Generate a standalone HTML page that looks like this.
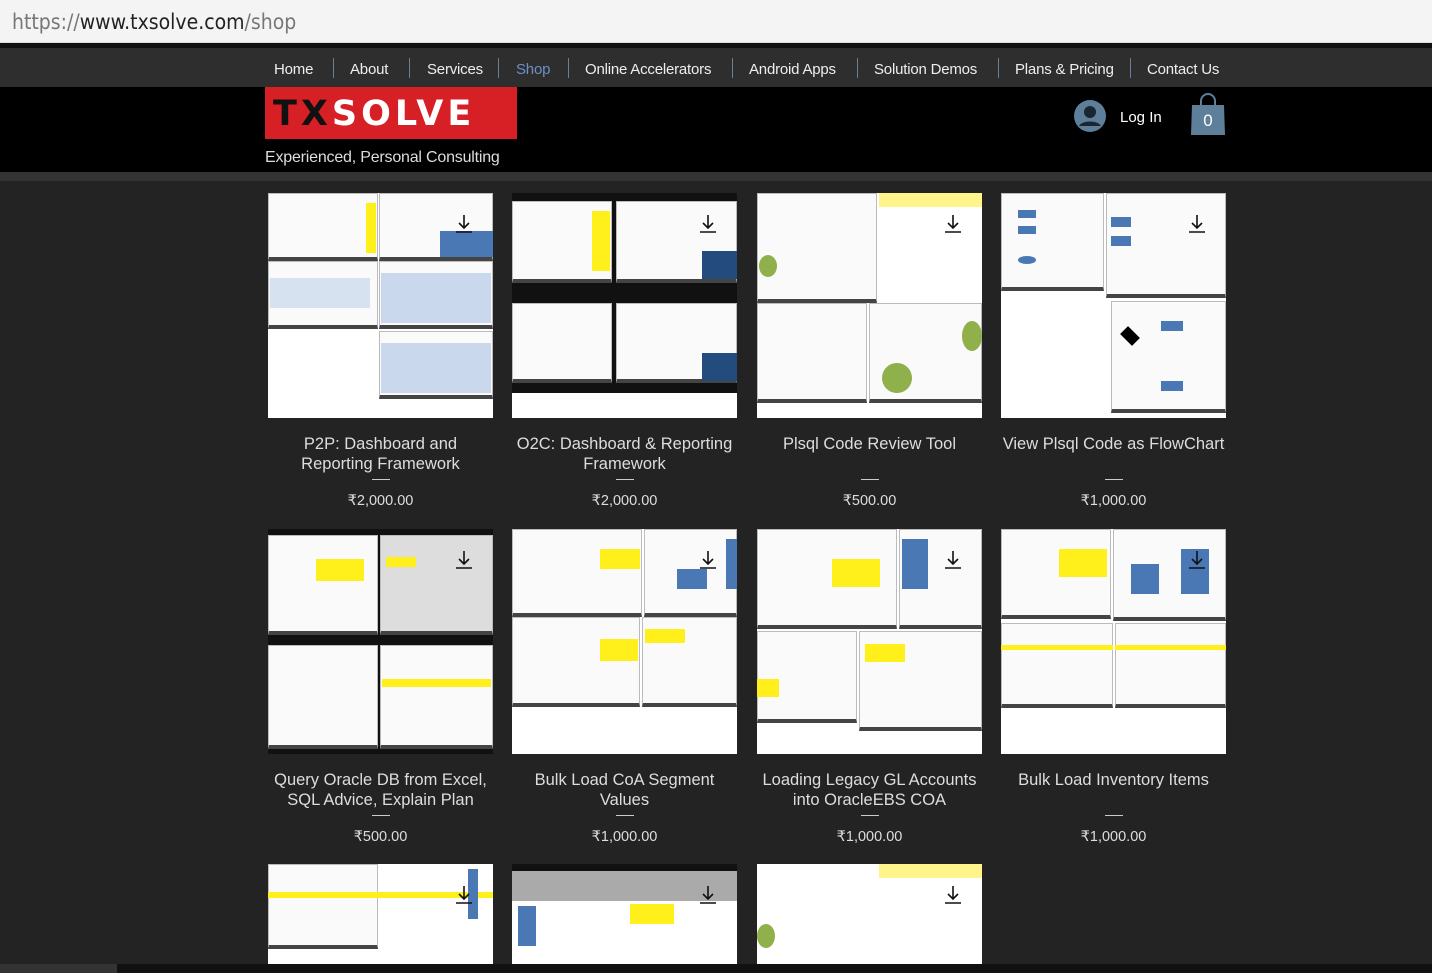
<!DOCTYPE html>
<html><head><meta charset="utf-8"><style>
*{margin:0;padding:0;box-sizing:border-box}
body{width:1432px;height:973px;overflow:hidden;background:#232323;font-family:"Liberation Sans",sans-serif;position:relative}
.url{position:absolute;left:0;top:0;width:1432px;height:43px;background:#f4f4f4;border-bottom:1px solid #ddd}
.url span{position:absolute;left:12px;top:10px;font-size:21px;color:#777;font-family:"DejaVu Sans Condensed","Liberation Sans",sans-serif}
.url b{font-weight:normal;color:#222}
.blk{position:absolute;left:0;top:43px;width:1432px;height:5px;background:#111}
.nav{position:absolute;left:0;top:48px;width:1432px;height:39px;background:#2e2e2e}
.nav a{position:absolute;top:13px;font-size:15px;color:#eee;text-decoration:none;white-space:nowrap;letter-spacing:-0.2px}
.sep{position:absolute;top:10px;width:1px;height:20px;background:#6a7fa0}
.hdr{position:absolute;left:0;top:87px;width:1432px;height:85px;background:#000}
.strip{position:absolute;left:0;top:172px;width:1432px;height:9px;background:#333}
.logo{position:absolute;left:265px;top:87px;width:252px;height:52px;background:#d71f26}
.logo span{position:absolute;left:8px;top:7px;font:bold 35px "DejaVu Sans",sans-serif;letter-spacing:4px;color:#fff}
.logo i{font-style:normal;color:#111}
.tag{position:absolute;left:265px;top:149px;color:#ddd;font-size:16px;letter-spacing:-0.2px}
.card{position:absolute;width:225px;text-align:center;color:#ddd}
.th{position:relative;width:225px;height:225px;background:#fff;overflow:hidden}
.p{position:absolute;background:#fafafa;border:1px solid #bbb;border-bottom:4px solid #444}
.y{position:absolute;background:#ffef1a}
.dl{position:absolute;left:186px;top:20px;width:20px;height:20px}
.t{font-size:16.5px;line-height:20px;margin-top:16px;height:40px;color:#ddd}
.rule{width:18px;height:1px;background:#ccc;margin:5px auto 0}
.pr{font-size:14.5px;margin-top:13px;color:#ddd}
</style></head><body>
<div class="url"><span>https://<b>www.txsolve.com</b>/shop</span></div>
<div class="blk"></div>
<div class="nav">
<a style="left:274px">Home</a><div class="sep" style="left:333px"></div>
<a style="left:350px">About</a><div class="sep" style="left:409px"></div>
<a style="left:427px">Services</a><div class="sep" style="left:498px"></div>
<a style="left:516px;color:#6e8fc4">Shop</a><div class="sep" style="left:568px"></div>
<a style="left:585px">Online Accelerators</a><div class="sep" style="left:732px"></div>
<a style="left:749px">Android Apps</a><div class="sep" style="left:857px"></div>
<a style="left:874px">Solution Demos</a><div class="sep" style="left:998px"></div>
<a style="left:1015px">Plans &amp; Pricing</a><div class="sep" style="left:1130px"></div>
<a style="left:1147px">Contact Us</a>
</div>
<div class="hdr"></div>
<div class="logo"><span><i>TX</i>SOLVE</span></div>
<div class="tag">Experienced, Personal Consulting</div>
<svg style="position:absolute;left:1073px;top:99px" width="34" height="34" viewBox="0 0 34 34"><circle cx="17" cy="17" r="16" fill="#5e7f99"/><circle cx="17" cy="13" r="6" fill="#1a2630"/><path d="M6 27c3-6 19-6 22 0" fill="#1a2630"/></svg>
<div style="position:absolute;left:1120px;top:109px;color:#fff;font-size:15px">Log In</div>
<svg style="position:absolute;left:1190px;top:92px" width="36" height="44" viewBox="0 0 36 44"><path d="M11 14V9a7 7 0 0 1 14 0v5" fill="none" stroke="#5e7f99" stroke-width="2"/><path d="M2 13h32l1 30H1z" fill="#5e7f99"/><text x="18" y="34" fill="#fff" font-size="17" text-anchor="middle" font-family="Liberation Sans">0</text></svg>
<div class="strip"></div>

<div class="card" style="left:268px;top:193px"><div class="th">
<div class="p" style="left:0;top:0;width:110px;height:68px"></div><div class="y" style="left:98px;top:10px;width:10px;height:50px"></div>
<div class="p" style="left:111px;top:0;width:114px;height:68px"></div><div class="y" style="left:172px;top:38px;width:53px;height:26px;background:#4a78b5"></div>
<div class="p" style="left:0;top:68px;width:110px;height:68px"></div><div class="y" style="left:2px;top:85px;width:100px;height:30px;background:#d6e2f0"></div>
<div class="p" style="left:111px;top:68px;width:114px;height:68px"></div><div class="y" style="left:113px;top:80px;width:110px;height:50px;background:#c9d8ec"></div>
<div class="p" style="left:111px;top:138px;width:114px;height:68px"></div><div class="y" style="left:113px;top:150px;width:110px;height:50px;background:#c9d8ec"></div>
<svg class="dl"><path d="M10 2v13M5 10l5 5 5-5M2 19h16" stroke="#111" stroke-width="1.6" fill="none"/></svg></div>
<div class="t">P2P: Dashboard and<br>Reporting Framework</div><div class="rule"></div><div class="pr">₹2,000.00</div></div>

<div class="card" style="left:512px;top:193px"><div class="th">
<div class="y" style="left:0;top:0;width:225px;height:200px;background:#111"></div>
<div class="p" style="left:0;top:8px;width:100px;height:82px"></div><div class="y" style="left:80px;top:18px;width:18px;height:60px"></div>
<div class="p" style="left:104px;top:8px;width:121px;height:82px"></div><div class="y" style="left:190px;top:58px;width:35px;height:28px;background:#244b7d"></div>
<div class="p" style="left:0;top:110px;width:100px;height:80px"></div>
<div class="p" style="left:104px;top:110px;width:121px;height:80px"></div><div class="y" style="left:190px;top:160px;width:35px;height:28px;background:#244b7d"></div>
<svg class="dl"><path d="M10 2v13M5 10l5 5 5-5M2 19h16" stroke="#111" stroke-width="1.6" fill="none"/></svg></div>
<div class="t">O2C: Dashboard &amp; Reporting<br>Framework</div><div class="rule"></div><div class="pr">₹2,000.00</div></div>

<div class="card" style="left:757px;top:193px"><div class="th">
<div class="p" style="left:0;top:0;width:120px;height:110px"></div><div class="y" style="left:2px;top:62px;width:18px;height:22px;background:#8fb04a;border-radius:50%"></div>
<div class="y" style="left:122px;top:0;width:103px;height:14px;background:#fff58a"></div>
<div class="p" style="left:0;top:110px;width:110px;height:100px"></div>
<div class="p" style="left:112px;top:110px;width:113px;height:100px"></div><div class="y" style="left:125px;top:170px;width:30px;height:30px;background:#8fb04a;border-radius:50%"></div><div class="y" style="left:205px;top:128px;width:20px;height:30px;background:#8fb04a;border-radius:50%"></div>
<svg class="dl"><path d="M10 2v13M5 10l5 5 5-5M2 19h16" stroke="#111" stroke-width="1.6" fill="none"/></svg></div>
<div class="t">Plsql Code Review Tool</div><div class="rule"></div><div class="pr">₹500.00</div></div>

<div class="card" style="left:1001px;top:193px"><div class="th">
<div class="p" style="left:0;top:0;width:103px;height:98px"></div>
<div class="y" style="left:17px;top:17px;width:18px;height:8px;background:#4a78b5"></div><div class="y" style="left:17px;top:33px;width:18px;height:8px;background:#4a78b5"></div><div class="y" style="left:17px;top:63px;width:18px;height:8px;background:#4a78b5;border-radius:50%"></div>
<div class="p" style="left:105px;top:0;width:120px;height:105px"></div>
<div class="y" style="left:110px;top:24px;width:20px;height:10px;background:#4a78b5"></div><div class="y" style="left:110px;top:43px;width:20px;height:10px;background:#4a78b5"></div>
<div class="p" style="left:110px;top:108px;width:115px;height:112px"></div>
<div class="y" style="left:117px;top:135px;width:24px;height:16px;background:#000;transform:rotate(45deg) scale(.7)"></div><div class="y" style="left:160px;top:128px;width:22px;height:10px;background:#4a78b5"></div><div class="y" style="left:160px;top:188px;width:22px;height:10px;background:#4a78b5"></div>
<svg class="dl"><path d="M10 2v13M5 10l5 5 5-5M2 19h16" stroke="#111" stroke-width="1.6" fill="none"/></svg></div>
<div class="t">View Plsql Code as FlowChart</div><div class="rule"></div><div class="pr">₹1,000.00</div></div>

<div class="card" style="left:268px;top:529px"><div class="th">
<div class="y" style="left:0;top:0;width:225px;height:225px;background:#111"></div>
<div class="p" style="left:0;top:6px;width:110px;height:100px"></div><div class="y" style="left:48px;top:30px;width:48px;height:22px"></div>
<div class="p" style="left:112px;top:6px;width:113px;height:100px;background:#ddd"></div><div class="y" style="left:118px;top:28px;width:30px;height:10px"></div>
<div class="p" style="left:0;top:116px;width:110px;height:104px"></div>
<div class="p" style="left:112px;top:116px;width:113px;height:104px"></div><div class="y" style="left:114px;top:150px;width:109px;height:8px"></div>
<svg class="dl"><path d="M10 2v13M5 10l5 5 5-5M2 19h16" stroke="#111" stroke-width="1.6" fill="none"/></svg></div>
<div class="t">Query Oracle DB from Excel,<br>SQL Advice, Explain Plan</div><div class="rule"></div><div class="pr">₹500.00</div></div>

<div class="card" style="left:512px;top:529px"><div class="th">
<div class="p" style="left:0;top:0;width:130px;height:88px"></div><div class="y" style="left:88px;top:20px;width:40px;height:20px"></div>
<div class="p" style="left:132px;top:0;width:93px;height:88px"></div><div class="y" style="left:165px;top:40px;width:30px;height:20px;background:#4a78b5"></div><div class="y" style="left:214px;top:10px;width:11px;height:50px;background:#4a78b5"></div>
<div class="p" style="left:0;top:88px;width:128px;height:90px"></div><div class="y" style="left:88px;top:110px;width:38px;height:22px"></div>
<div class="p" style="left:130px;top:88px;width:95px;height:90px"></div><div class="y" style="left:133px;top:100px;width:40px;height:14px"></div>
<svg class="dl"><path d="M10 2v13M5 10l5 5 5-5M2 19h16" stroke="#111" stroke-width="1.6" fill="none"/></svg></div>
<div class="t">Bulk Load CoA Segment<br>Values</div><div class="rule"></div><div class="pr">₹1,000.00</div></div>

<div class="card" style="left:757px;top:529px"><div class="th">
<div class="p" style="left:0;top:0;width:140px;height:100px"></div><div class="y" style="left:75px;top:30px;width:48px;height:28px"></div>
<div class="p" style="left:142px;top:0;width:83px;height:100px"></div><div class="y" style="left:145px;top:10px;width:26px;height:50px;background:#4a78b5"></div>
<div class="p" style="left:0;top:102px;width:100px;height:92px"></div><div class="y" style="left:0;top:150px;width:22px;height:18px"></div>
<div class="p" style="left:102px;top:102px;width:123px;height:100px"></div><div class="y" style="left:108px;top:115px;width:40px;height:18px"></div>
<svg class="dl"><path d="M10 2v13M5 10l5 5 5-5M2 19h16" stroke="#111" stroke-width="1.6" fill="none"/></svg></div>
<div class="t">Loading Legacy GL Accounts<br>into OracleEBS COA</div><div class="rule"></div><div class="pr">₹1,000.00</div></div>

<div class="card" style="left:1001px;top:529px"><div class="th">
<div class="p" style="left:0;top:0;width:110px;height:90px"></div><div class="y" style="left:58px;top:20px;width:48px;height:28px"></div>
<div class="p" style="left:112px;top:0;width:113px;height:92px"></div><div class="y" style="left:130px;top:35px;width:28px;height:30px;background:#4a78b5"></div><div class="y" style="left:180px;top:20px;width:28px;height:45px;background:#4a78b5"></div>
<div class="p" style="left:0;top:94px;width:112px;height:85px"></div><div class="y" style="left:0;top:116px;width:112px;height:5px"></div>
<div class="p" style="left:114px;top:94px;width:111px;height:85px"></div><div class="y" style="left:114px;top:116px;width:111px;height:5px"></div>
<svg class="dl"><path d="M10 2v13M5 10l5 5 5-5M2 19h16" stroke="#111" stroke-width="1.6" fill="none"/></svg></div>
<div class="t">Bulk Load Inventory Items</div><div class="rule"></div><div class="pr">₹1,000.00</div></div>

<div class="card" style="left:268px;top:864px"><div class="th" style="height:100px">
<div class="p" style="left:0;top:0;width:110px;height:85px"></div><div class="y" style="left:0;top:28px;width:225px;height:6px"></div>
<div class="y" style="left:200px;top:5px;width:10px;height:50px;background:#4a78b5"></div>
<svg class="dl"><path d="M10 2v13M5 10l5 5 5-5M2 19h16" stroke="#111" stroke-width="1.6" fill="none"/></svg></div></div>
<div class="card" style="left:512px;top:864px"><div class="th" style="height:100px">
<div class="y" style="left:0;top:0;width:225px;height:7px;background:#111"></div><div class="y" style="left:0;top:7px;width:225px;height:30px;background:#aaa"></div>
<div class="y" style="left:6px;top:42px;width:18px;height:40px;background:#4a78b5"></div><div class="y" style="left:118px;top:40px;width:44px;height:20px"></div>
<svg class="dl"><path d="M10 2v13M5 10l5 5 5-5M2 19h16" stroke="#111" stroke-width="1.6" fill="none"/></svg></div></div>
<div class="card" style="left:757px;top:864px"><div class="th" style="height:100px">
<div class="y" style="left:122px;top:0;width:103px;height:14px;background:#fff58a"></div><div class="y" style="left:0;top:60px;width:18px;height:24px;background:#8fb04a;border-radius:50%"></div>
<svg class="dl"><path d="M10 2v13M5 10l5 5 5-5M2 19h16" stroke="#111" stroke-width="1.6" fill="none"/></svg></div></div>
<div style="position:absolute;left:0;top:964px;width:1432px;height:9px;background:#111"></div>
<div style="position:absolute;left:0;top:964px;width:117px;height:9px;background:#333"></div>
</body></html>
